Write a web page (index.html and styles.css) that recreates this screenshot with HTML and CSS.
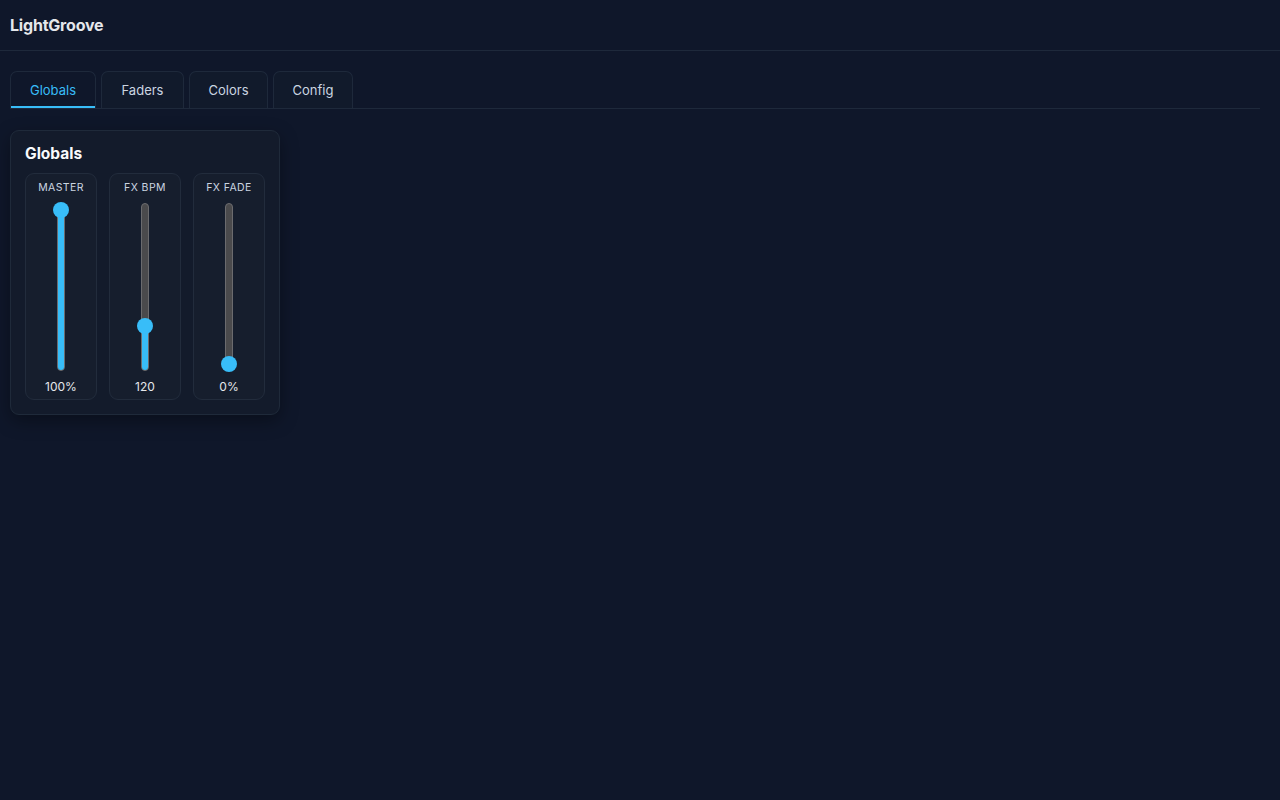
FILE: index.html
```html
<!DOCTYPE html>
<html lang="en">
<head>
<meta charset="utf-8">
<title>LightGroove</title>
<link rel="stylesheet" href="styles.css">
</head>
<body>
<header class="topbar">
  <h1 class="brand">LightGroove</h1>
</header>
<main class="main">
  <nav class="tabs">
    <button class="tab active">Globals</button>
    <button class="tab">Faders</button>
    <button class="tab">Colors</button>
    <button class="tab">Config</button>
  </nav>
  <section class="card">
    <h2 class="card-title">Globals</h2>
    <div class="faders">
      <div class="fader">
        <div class="fader-label">MASTER</div>
        <div class="slider" style="--p: 1">
          <div class="track"><div class="fill"></div></div>
          <div class="thumb"></div>
        </div>
        <div class="fader-value">100%</div>
      </div>
      <div class="fader">
        <div class="fader-label">FX BPM</div>
        <div class="slider" style="--p: 0.25">
          <div class="track"><div class="fill"></div></div>
          <div class="thumb"></div>
        </div>
        <div class="fader-value">120</div>
      </div>
      <div class="fader">
        <div class="fader-label">FX FADE</div>
        <div class="slider" style="--p: 0">
          <div class="track"><div class="fill"></div></div>
          <div class="thumb"></div>
        </div>
        <div class="fader-value">0%</div>
      </div>
    </div>
  </section>
</main>
</body>
</html>
```
FILE: styles.css
```css
* { box-sizing: border-box; }
html, body {
  margin: 0;
  padding: 0;
  background: #0f172a;
  color: #e5e7eb;
  font-family: Inter, "Noto Sans", "Liberation Sans", sans-serif;
  height: 100%;
}
.topbar {
  height: 51px;
  display: flex;
  align-items: center;
  padding: 0 10px;
  border-bottom: 1px solid #1e293b;
}
.brand {
  margin: 0;
  font-size: 16px;
  font-weight: 700;
  color: #e5e7eb;
  letter-spacing: -0.2px;
}
.main {
  padding: 20px 20px 10px 10px;
}
.tabs {
  display: flex;
  gap: 5px;
  border-bottom: 1px solid #1e293b;
  margin-bottom: 21px;
  height: 38px;
}
.tab {
  font-family: inherit;
  font-size: 13px;
  color: #cbd5e1;
  background: #111a2b;
  border: 1px solid #1e293b;
  border-bottom: none;
  border-radius: 7px 7px 0 0;
  height: 37px;
  padding: 0 10px;
  cursor: pointer;
}
.tab:nth-child(1) { width: 86px; }
.tab:nth-child(2) { width: 83px; }
.tab:nth-child(3) { width: 79px; }
.tab:nth-child(4) { width: 80px; }
.tab.active {
  color: #38bdf8;
  background: #0f172a;
  box-shadow: inset 0 -2px 0 #38bdf8;
}
.card {
  width: 270px;
  background: #131b2b;
  border: 1px solid #1f2a3a;
  border-radius: 9px;
  padding: 14px 14px 14px 14px;
  box-shadow: 0 6px 18px rgba(0, 0, 0, 0.35);
}
.card-title {
  margin: 0 0 10px;
  font-size: 15.5px;
  line-height: 18px;
  font-weight: 700;
  color: #f8fafc;
}
.faders {
  display: flex;
  gap: 12px;
}
.fader {
  width: 72px;
  height: 227px;
  background: #161e2d;
  border: 1px solid #222c3c;
  border-radius: 9px;
  padding: 8px 0 0;
  display: flex;
  flex-direction: column;
  align-items: center;
  gap: 8px;
}
.fader-label {
  font-size: 10.5px;
  line-height: 12px;
  letter-spacing: 0.4px;
  color: #cbd5e1;
}
.slider {
  position: relative;
  width: 16px;
  height: 170px;
  flex: none;
}
.track {
  position: absolute;
  left: 4px;
  top: 1px;
  width: 8px;
  height: 168px;
  background: #4a4a4c;
  border: 1px solid #6b6b6e;
  border-radius: 4px;
  overflow: hidden;
}
.fill {
  position: absolute;
  left: -1px;
  right: -1px;
  bottom: -1px;
  height: calc(var(--p) * 154px + 8px);
  background: #38bdf8;
  border-radius: 4px;
}
.thumb {
  position: absolute;
  left: 0;
  bottom: calc(var(--p) * 154px);
  width: 16px;
  height: 16px;
  border-radius: 50%;
  background: #38bdf8;
}
.fader-value {
  font-size: 12px;
  line-height: 14px;
  color: #e5e7eb;
}
```
